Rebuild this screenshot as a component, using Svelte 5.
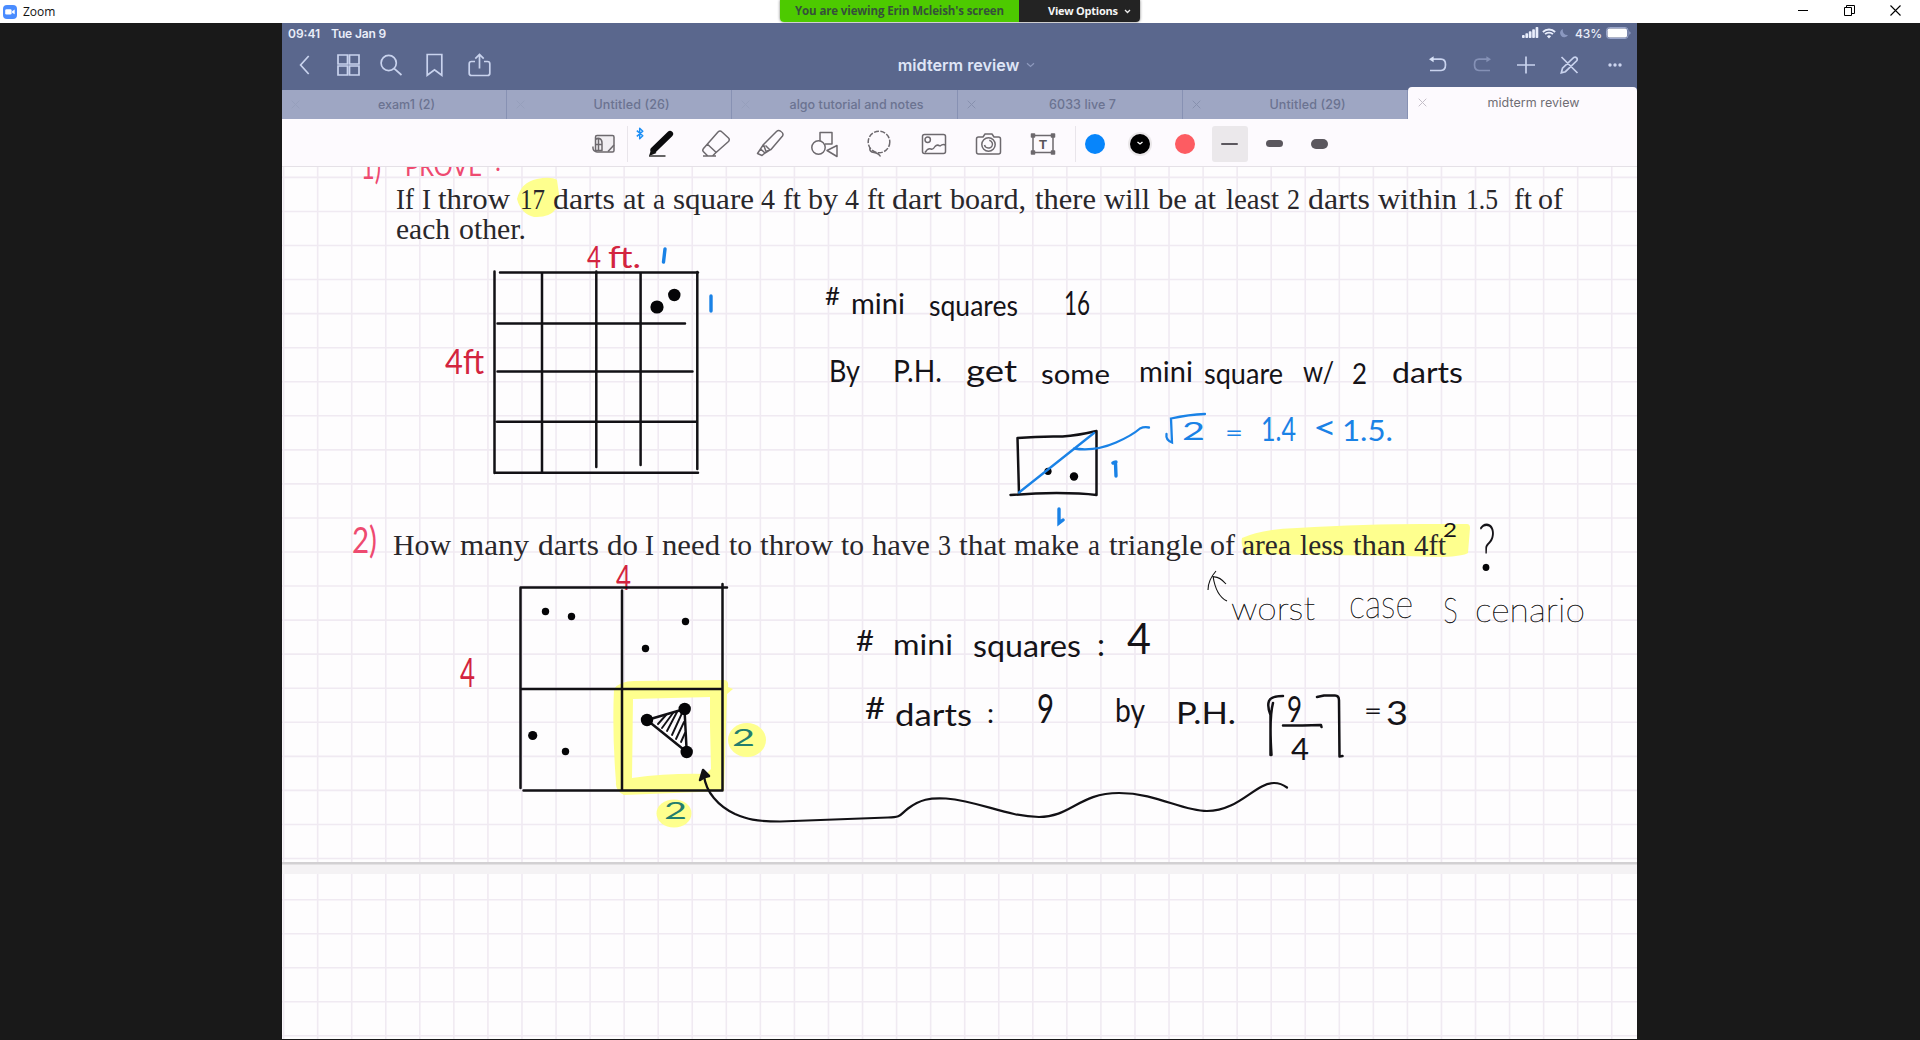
<script>
  const tabs = ['exam1 (2)', 'Untitled (26)', 'algo tutorial and notes', '6033 live 7', 'Untitled (29)'];
  const tabWidths = [57, 76, 134, 67, 76];

  const pitch = 34.055;
  const columns = Array.from({ length: 40 }, (_, i) => 283.6 + i * pitch);
  const rowsOne = Array.from({ length: 21 }, (_, i) => 177.4 + i * pitch);
  const rowsTwo = Array.from({ length: 5 }, (_, i) => 899.7 + i * 34);

  // Printed words: text, left edge, width
  const lineOne = [
    ['If', 396, 18], ['I', 422, 9], ['throw', 438, 72], ['17', 520, 25], ['darts', 553, 62],
    ['at', 623, 22], ['a', 653, 12], ['square', 673, 81], ['4', 761, 14], ['ft', 783, 18],
    ['by', 808, 30], ['4', 845, 14], ['ft', 867, 18], ['dart', 892, 50], ['board,', 950, 76],
    ['there', 1035, 61], ['will', 1104, 46], ['be', 1158, 29], ['at', 1194, 22], ['least', 1226, 53],
    ['2', 1287, 13], ['darts', 1308, 62], ['within', 1378, 79], ['1.5', 1466, 32], ['ft', 1514, 18], ['of', 1538, 25]
  ];
  const lineTwo = [['each', 396, 54], ['other.', 459, 67]];
  const lineThree = [
    ['How', 393, 58], ['many', 460, 69], ['darts', 538, 61], ['do', 607, 31], ['I', 645, 9],
    ['need', 662, 58], ['to', 729, 23], ['throw', 760, 73], ['to', 841, 23], ['have', 872, 58],
    ['3', 938, 13], ['that', 959, 47], ['make', 1014, 65], ['a', 1088, 12], ['triangle', 1109, 94],
    ['of', 1210, 25], ['area', 1242, 49], ['less', 1300, 44], ['than', 1353, 53], ['4ft', 1414, 32]
  ];
  const printed = [
    ...lineOne.map((w) => [...w, 209]),
    ...lineTwo.map((w) => [...w, 239]),
    ...lineThree.map((w) => [...w, 554.5])
  ];

  // Pen notes: text, left edge, width, baseline, font size, ink
  const notes = [
    ['1)', 361, 20, 179, 36, 'pink'], ['PROVE', 405, 77, 175.5, 27, 'pink'], [':', 495, 6, 171, 27, 'pink'],
    ['4', 587, 14, 268, 30, 'red'], ['ft.', 608, 33, 268, 30, 'red'],
    ['4ft', 445, 39, 374, 34, 'red'],
    ['#', 825, 15, 305, 25, 'ink'], ['mini', 851, 54, 314, 28, 'ink'], ['squares', 929, 89, 316, 29, 'ink'],
    ['16', 1064, 26, 315, 33, 'ink'],
    ['By', 829, 31, 382, 31, 'ink'], ['P.H.', 893, 49, 382, 31, 'ink'], ['get', 966, 51, 382, 30, 'ink'],
    ['some', 1041, 69, 384, 26, 'ink'], ['mini', 1139, 54, 382, 28, 'ink'], ['square', 1204, 79, 384, 28, 'ink'],
    ['w/', 1303, 31, 382, 29, 'ink'], ['2', 1352, 15, 384, 28, 'ink'], ['darts', 1392, 71, 383, 29, 'ink'],
    ['2', 1182, 23, 440, 25, 'blue'], ['=', 1225, 18, 441, 24, 'blue'], ['1.4', 1261, 35, 441, 32, 'blue'],
    ['<', 1313, 24, 439, 32, 'blue'], ['1.5.', 1342, 51, 441, 29, 'blue'],
    ['2)', 352, 25, 553, 37, 'pink'],
    ['2', 1443, 14, 537, 19, 'ink'], ['?', 1478, 18, 569, 64, 'ink thin'],
    ['4', 616, 15, 590, 34, 'red'], ['4', 460, 15, 687, 41, 'red'],
    ['2', 732, 23, 746, 23, 'green'], ['2', 664, 23, 819, 24, 'green'],
    ['#', 856, 18, 651, 29, 'ink'], ['mini', 893, 60, 655, 29, 'ink'], ['squares', 973, 108, 657, 30, 'ink'],
    [':', 1097, 8, 656, 30, 'ink'], ['4', 1127, 24, 654, 42, 'ink'],
    ['#', 865, 20, 719, 31, 'ink'], ['darts', 895, 77, 726, 30, 'ink'], [':', 987, 7, 723, 26, 'ink'],
    ['9', 1037, 17, 723, 40, 'ink'], ['by', 1115, 30, 722, 33, 'ink'], ['P.H.', 1176, 60, 724, 31, 'ink'],
    ['9', 1287, 15, 722, 37, 'ink'], ['4', 1291, 18, 760, 30, 'ink'], ['=', 1364, 18, 719, 24, 'ink'],
    ['3', 1386, 22, 725, 33, 'ink'],
    ['worst', 1231, 84, 620, 32, 'fine'], ['case', 1349, 64, 618, 40, 'fine'],
    ['s', 1443, 15, 623, 50, 'fine'], ['cenario', 1475, 110, 622, 34, 'fine']
  ];

  // Dart marks: x, y, radius
  const darts = [
    [657, 307, 6.6], [674.3, 295, 6.2], [1048, 471.3, 3.6], [1074, 476.5, 4.2],
    [545.5, 611.5, 3.7], [571.5, 616.5, 3.7], [685.5, 621.5, 3.7], [645.5, 648.5, 3.7],
    [532.7, 735.5, 4.6], [565.5, 751.5, 3.7],
    [647, 720, 6.2], [684.7, 709, 6.2], [686.7, 752, 6.2], [1486, 567.5, 3.4]
  ];
</script>

<div class="window">
  <header class="titlebar">
    <div class="app">
      <svg width="14" height="14" viewBox="0 0 14 14"><rect width="14" height="14" rx="4" fill="#4a8cff" /><rect x="2.2" y="4.3" width="6.4" height="5.2" rx="1.3" fill="#fff" /><path d="M9.1 6.2 11.7 4.6v4.6L9.1 7.7z" fill="#fff" /></svg>
      <span class="appname">Zoom</span>
    </div>
    <div class="share">
      <div class="viewing">You are viewing Erin Mcleish's screen</div>
      <div class="options">View Options <svg width="7" height="5" viewBox="0 0 7 5"><path d="M1 1l2.5 2.5L6 1" fill="none" stroke="#eee" stroke-width="1.3" /></svg></div>
    </div>
    <div class="controls">
      <svg width="11" height="11" viewBox="0 0 11 11"><path d="M0 5.5h10" stroke="#000" /></svg>
      <svg width="11" height="11" viewBox="0 0 11 11"><path d="M.5 2.5h7v8h-7zM2.5 2.5v-2h8v8h-3" fill="none" stroke="#000" /></svg>
      <svg width="11" height="11" viewBox="0 0 11 11"><path d="M.5.5l10 10M10.5.5l-10 10" stroke="#000" stroke-width="1.1" /></svg>
    </div>
  </header>

  <main class="screen">
    <section class="nav">
      <div class="status">
        <span class="clock">09:41</span><span class="date">Tue Jan 9</span>
        <div class="signals">
          <svg width="17" height="12" viewBox="0 0 17 12" fill="#e9eefc"><rect y="8" width="2.7" height="3" rx=".8" /><rect x="3.4" y="6.3" width="2.7" height="4.7" rx=".8" /><rect x="6.8" y="4.3" width="2.7" height="6.7" rx=".8" /><rect x="10.2" y="2.2" width="2.7" height="8.8" rx=".8" /><rect x="13.6" y="0" width="2.7" height="11" rx=".8" /></svg>
          <svg class="wifi" width="14" height="11" viewBox="0 0 14 11"><path d="M.9 4a8.6 8.6 0 0 1 12.2 0M3.1 6.2a5.5 5.5 0 0 1 7.8 0" fill="none" stroke="#e9eefc" stroke-width="1.9" /><path d="M7 10.6 4.9 8.3a3 3 0 0 1 4.2 0z" fill="#e9eefc" /></svg>
          <svg class="moon" width="9" height="10" viewBox="0 0 9 10"><path d="M3 1a4.2 4.2 0 1 0 5 6A4.6 4.6 0 0 1 3 1z" fill="#8b98c0" /></svg>
          <span class="percent">43%</span>
          <svg width="25" height="12" viewBox="0 0 25 12"><rect x=".5" y=".5" width="21.5" height="11" rx="3" fill="none" stroke="#9aa6cb" /><rect x="1.5" y="1.5" width="19.500" height="9" rx="1.8" fill="#fff" /><path d="M23.3 4.2v3.6q1.3-.6 1.3-1.8t-1.3-1.8z" fill="#9aa6cb" /></svg>
        </div>
      </div>
      <div class="bar">
        <div class="left">
          <svg width="11" height="22" viewBox="0 0 11 22"><path d="M9.7 2 1.6 11l8.1 9" /></svg>
          <svg width="23" height="22" viewBox="0 0 23 22"><path d="M1 1h9.5v9H1zM12.5 1H22v9h-9.500zM1 12h9.500v9H1zM12.500 12H22v9h-9.500z" /></svg>
          <svg width="23" height="22" viewBox="0 0 23 22"><circle cx="8.700" cy="9" r="7.600" /><path d="M14.300 14.600 21.500 21" /></svg>
          <svg width="17" height="24" viewBox="0 0 17 24"><path d="M1.200 1.500h14.600v20.800L8.500 16.800l-7.300 5.500z" /></svg>
          <svg width="23" height="24" viewBox="0 0 23 24"><path d="M7 8.500H3.500Q1.200 8.500 1.200 10.800v9.400q0 2.300 2.300 2.300h16q2.300 0 2.300-2.300v-9.400q0-2.300-2.300-2.300H16M11.500 15.500V1.700M7.300 5.700l4.200-4.200 4.200 4.200" /></svg>
        </div>
        <div class="title">midterm review <svg width="9" height="6" viewBox="0 0 9 6"><path d="M1 1.200l3.500 3.300L8 1.200" /></svg></div>
        <div class="right">
          <svg width="18" height="18" viewBox="0 0 18 18"><path d="M2 3.200h10q4.500 0 4.500 5.500t-4.500 5.800H1" /><path class="solid" d="M0 3.200 4.600.2v6z" /></svg>
          <svg class="dim" width="18" height="18" viewBox="0 0 18 18"><path d="M16 3.200H6q-4.500 0-4.500 5.500T6 14.500h11" /><path class="soliddim" d="M18 3.200 13.400.2v6z" /></svg>
          <svg width="18" height="18" viewBox="0 0 18 18"><path d="M0 9h18M9 .5v17" /></svg>
          <svg width="19" height="18" viewBox="0 0 19 18"><path d="M1.500 1 17.500 17M1.300 16.800l1.200-4.600L13.800 1.400q1.600-.9 2.900.5 1.100 1.400 0 2.900L5.400 15.700z" /></svg>
          <svg width="14" height="6" viewBox="0 0 14 6" class="dots"><circle cx="2" cy="3" r="1.700" /><circle cx="7" cy="3" r="1.700" /><circle cx="12" cy="3" r="1.700" /></svg>
        </div>
      </div>
      <div class="tabs">
        {#each tabs as tab, i}
          <div class="tab">
            <svg class={i < 3 ? 'close faint' : 'close'} width="9" height="9" viewBox="0 0 9 9"><path d="M.7.7l7.600 7.600M8.300.7.7 8.300" /></svg>
            <svg class="label" width="226" height="18"><text x="124.500" y="13.500" text-anchor="middle" textLength={tabWidths[i]}>{tab}</text></svg>
          </div>
        {/each}
        <div class="tab active">
          <svg class="close" width="9" height="9" viewBox="0 0 9 9"><path d="M.7.7l7.600 7.600M8.300.7.7 8.300" /></svg>
          <svg class="label" width="226" height="18"><text x="128.500" y="13" text-anchor="middle" textLength="92">midterm review</text></svg>
        </div>
      </div>
    </section>

    <section class="tools">
      <div class="cell side">
        <svg width="24" height="20" viewBox="0 0 24 20"><path d="M5 1.500h15.500q1.500 0 1.500 1.500v13.500q0 1.500-1.500 1.500H5q-1.500 0-1.500-1.500V3Q3.500 1.500 5 1.500z" fill="#f1eef2" /><path d="M3.500 5.500Q5 4 7.500 4.500 10 5.500 10 9v7.500H3.500M1 12.500q-.5 4.500 3 5M3.500 10.500H10M6.500 5v11M22 11l-6 6.500" /></svg>
      </div>
      <div class="rule"></div>
      <div class="cell pen">
        <svg class="bluetooth" width="8" height="13" viewBox="0 0 8 13"><path d="M.8 3.600l6 5.200L3.700 11.700V1.300l3.100 2.900-6 5.200" /></svg>
        <svg width="28" height="29" viewBox="0 0 28 29"><path d="M6.500 21 23 5" stroke="#0b0b0d" stroke-width="6.200" stroke-linecap="round" /><path d="M2 27 4.500 19.500l5 4.500z" fill="#111" stroke="none" /><path d="M2 27H18.500" stroke="#333" stroke-width="1.500" /></svg>
      </div>
      <div class="cell">
        <svg width="30" height="29" viewBox="0 0 30 29"><path d="M2.500 19.500 17 3q2-2 4 0l6.500 6q1.500 1.500 0 3.500L14.500 24l-3 3H6.800l-4.300-4.200q-1.500-1.500 0-3.300zM6.500 15.200l8.500 8M2 27h13" /></svg>
      </div>
      <div class="cell">
        <svg width="29" height="29" viewBox="0 0 29 29"><path d="M7.500 15.500 20.500 2.500q2-1.800 4.500 0 3 2 1.500 4.500L15 20.500l-5 2zM7.500 15.500 4.500 20l4.500 4 5.500-3.500M9.500 16.500l4 4M4.500 20 1.500 24.500l4.500 2 3-2.500" /></svg>
      </div>
      <div class="cell">
        <svg width="29" height="28" viewBox="0 0 29 28"><path d="M10 11V2.500h12V14H15" /><circle cx="8.500" cy="17.500" r="6.700" /><path d="M17 20.500 27 15.500v11z" /></svg>
      </div>
      <div class="cell">
        <svg width="26" height="28" viewBox="0 0 26 28"><circle cx="13" cy="12" r="10.800" stroke-dasharray="5 1.500" /><path d="M4 17.500q-1 4.500 4 5 4.500.5 6.500 4" /></svg>
      </div>
      <div class="cell">
        <svg width="26" height="24" viewBox="0 0 26 24"><rect x="1.500" y="2.500" width="23" height="19" rx="2" /><circle cx="6.700" cy="7.800" r="2.700" /><path d="M4 20.500q3-5 6-3.500 2 1 4-2.500 2-2.500 5-.5 3-2.500 5.500-1" /></svg>
      </div>
      <div class="cell">
        <svg width="27" height="24" viewBox="0 0 27 24"><path d="M3.500 5H8l2-3h7l2 3h4.500q2 0 2 2v13q0 2-2 2h-20q-2 0-2-2V7q0-2 2-2z" /><circle cx="13.500" cy="12.500" r="6.700" /><path d="M9.500 13a4 4 0 0 0 7.800-2 4.500 4.500 0 0 0-3-2.700" /></svg>
      </div>
      <div class="cell">
        <svg width="26" height="24" viewBox="0 0 26 24"><rect x="3" y="3.500" width="20" height="17" /><path d="M1.500 2h3v3h-3zM21.500 2h3v3h-3zM1.500 19h3v3h-3zM21.500 19h3v3h-3z" fill="#6d696e" /><text class="tletter" x="13" y="17" text-anchor="middle">T</text></svg>
      </div>
      <div class="rule late"></div>
      <div class="swatch"><i class="dot azure"></i></div>
      <div class="swatch"><i class="dot black"><svg width="8" height="5" viewBox="0 0 8 5"><path d="M1.500 1l2.500 2 2.500-2" stroke="#fff" stroke-width="1.300" /></svg></i></div>
      <div class="swatch"><i class="dot coral"></i></div>
      <div class="swatch chosen"><i class="stroke s1"></i></div>
      <div class="swatch"><i class="stroke s2"></i></div>
      <div class="swatch"><i class="stroke s3"></i></div>
    </section>

    <svg class="canvas" width="1355" height="872" viewBox="282 167 1355 872">
      <rect x="282" y="167" width="1355" height="872" fill="#fefdfe" />
      <g class="grid">
        {#each columns as x}<path d="M{x} 167V862M{x} 874V1039" />{/each}
        {#each rowsOne as y}<path d="M282 {y}H1637" />{/each}
        {#each rowsTwo as y}<path d="M282 {y}H1637" />{/each}
      </g>
      <rect x="282" y="862" width="1355" height="12" fill="#f4f2f4" />
      <rect x="282" y="862" width="1355" height="2.500" fill="#d2d0d2" />

      <g fill="#feff8e">
        <path d="M517 199q4-17 20-20 14-3 20 1l2 14-3 15q-7 9-22 8-13-3-17-18z" />
        <path d="M1242 538q20-9 55-10 70-4 125-4h45q3 0 3 4l-2 25q-5 3-25 4l-40-1q-90-1-155-2-8-6-6-16z" />
        <path fill-rule="evenodd" d="M614 689q6-8 20-8l90-1q5 0 4 7l5 2-6 5-3 97-100 4q-9-4-8-13-4-50-2-93zM633 699l-1 79q37-5 74-4l5-5-1-43v-29z" />
        <ellipse cx="747" cy="740" rx="19" ry="17" /><ellipse cx="674" cy="813.500" rx="17.500" ry="14" />
      </g>

      <g class="printed">
        {#each printed as [word, x, width, y]}<text {x} {y} textLength={width} lengthAdjust="spacingAndGlyphs">{word}</text>{/each}
      </g>
      <g class="notes">
        {#each notes as [word, x, width, y, size, ink]}<text class={ink} {x} {y} font-size={size} textLength={width} lengthAdjust="spacingAndGlyphs">{word}</text>{/each}
      </g>

      <g class="strokes">
        <path d="M494.500 271.500V473M500 272.500H698M542 273V472M596.300 271.500V467M640.600 273V465M697.300 272V469M497.500 323.500H685M497.500 371.500H692.500M497 421.700H697M494.500 472.700H698" />
        <path d="M520.500 788V587.500H727M622 590.500V789M722.500 584V790M520.500 689H722M523.500 790.500H722.500" />
        <path d="M1019 494 1017.500 438q22-2 45-1.500 15-1 34-5.500V495q-15-2-40-2-25 .5-46 2" />
        <path d="M647 720 684.500 709 686.700 752z" />
        <path class="hatch" d="M658 724l8-9M662 728l11-15M667 731l10-19M672 735l11-24M676 739l8-17M681 742l4-9" />
        <path class="tail" d="M704 776C706 792 718 806 735 814c12 5 20 7.500 45 7.500L888 817.500c14 0 12-3 20-9 12-9 22-11 38-10 35 3 60 18 93 18.500 32 0 40-24 80-24 38 0 62 18 88 18 32 0 48-28 67-28q7 0 13 4.500" />
        <path class="solidink" d="M703 770l6 6-4 1-5 3z" />
        <path d="M1283 696q-12 0-14 5-2 5 1.500 14v40M1273 703q-4 15-1.500 52M1317 697l7-1.500h11q4 0 4 5l.5 56 3-.5M1283 725.500q20 0 38-.5l.5 2" />
      </g>
      {#each darts as [cx, cy, r]}<circle {cx} {cy} {r} fill="#050507" />{/each}
      <g class="bluelines">
        <path d="M1019 492.500 1094 433M1074 448.500c13 2 26 1 42-6q16-7 24-14 4-2 9-1" />
        <path d="M1166.500 434q-1 6 5.500 8.500l-1-24q18-4 34-4.500" />
        <path class="bold" d="M665 249l-1.500 13M711 296v15M1113 463q1-1 3-1M1115.500 463l.5 13M1059 509v14l4-3" />
      </g>
      <path class="finearrow" d="M1208 590q0-10 8-19M1213 577q6-1 13 7M1213 576q3 20 14 25" />
    </svg>
  </main>
</div>

<style>
  :global(body) { margin: 0; background: #191919; overflow: hidden; }
  .window { width: 1920px; height: 1040px; background: #191919; font-family: Inter, "Liberation Sans", sans-serif; }
  .titlebar { height: 23px; background: #fff; display: grid; grid-template-columns: 1fr 360px 1fr; }
  .app { display: flex; align-items: center; padding-left: 3px; gap: 6px; font: 12px "Open Sans", sans-serif; color: #111; }
  .appname { letter-spacing: 0; }
  .share { display: flex; height: 22px; font: 700 11.500px/22px "Open Sans", sans-serif; border-radius: 0 0 4px 4px; overflow: hidden; box-shadow: 0 0 3px #777; }
  .viewing { width: 239px; background: #4dca00; color: #35513a; text-align: center; white-space: nowrap; letter-spacing: -0.120px; }
  .options { flex: 1; background: #232323; color: #f5f5f5; display: flex; align-items: center; padding-left: 29px; gap: 6px; font-size: 11px; letter-spacing: -0.250px; }
  .controls { display: flex; align-items: flex-start; justify-content: flex-end; gap: 35px; padding: 5px 19px 0 0; }
  .screen { width: 1355px; margin-left: 282px; height: 1016px; overflow: hidden; display: flex; flex-direction: column; }
  .nav { background: #5a678d; height: 96px; flex: none; display: flex; flex-direction: column; }
  .status { display: flex; align-items: center; height: 20px; padding: 0 6px; color: #e9edf9; font-size: 12px; font-weight: 600; }
  .clock { width: 43px; }
  .date { letter-spacing: -0.150px; }
  .signals { margin-left: auto; display: flex; align-items: center; gap: 4px; }
  .wifi { margin-left: -1px; }
  .percent { margin-left: 2px; font-weight: 500; letter-spacing: -0.100px; }
  .bar { height: 43px; display: grid; grid-template-columns: 1fr auto 1fr; align-items: center; padding: 0 15px 0 17px; }
  .bar svg { fill: none; stroke: #c9d3ee; stroke-width: 1.700; }
  .left { display: flex; align-items: center; }
  .left svg:nth-child(2) { margin-left: 27px; }
  .left svg:nth-child(3) { margin-left: 20px; }
  .left svg:nth-child(4) { margin-left: 23px; }
  .left svg:nth-child(5) { margin-left: 25px; }
  .title { color: #dfe5f6; font-size: 16.200px; font-weight: 600; display: flex; align-items: center; gap: 7px; padding-left: 12px; }
  .title svg { stroke: #8d99bd; stroke-width: 1.200; }
  .right { display: flex; align-items: center; justify-content: flex-end; gap: 26px; }
  .right svg:nth-child(5) { margin-left: 3px; }
  .right svg:nth-child(4) { margin-left: -1px; }
  .bar .dim { stroke: #8591b6; }
  .bar .solid { fill: #d8e2f8; stroke: none; }
  .bar .soliddim { fill: #8591b6; stroke: none; }
  .bar .dots { fill: #ccd5ef; stroke: none; }
  .tabs { flex: 1; display: flex; align-items: flex-end; }
  .tab { width: 224.200px; height: 29.500px; border-right: 1px solid #8791b3; background: #9ea6c3; display: flex; align-items: center; position: relative; overflow: hidden; }
  .tab .close { margin-left: 9px; flex: none; fill: none; stroke: #8790ae; }
  .tab .faint { opacity: 0.3; }
  .label { margin-left: -18px; flex: none; font-size: 12.500px; font-weight: 500; fill: #6b7391; }
  .active { flex: 1; height: 32.500px; background: #fdfafe; border: 0; border-radius: 4px 4px 0 0; }
  .active .close { stroke: #c4bfc8; margin-left: 10px; }
  .active .label { fill: #706d74; font-weight: 400; margin-left: -22px; }
  .tools { height: 48px; flex: none; box-sizing: border-box; background: #fdfafe; border-bottom: 1px solid #e5e1e7; display: flex; align-items: center; padding: 2px 0 0 310px; }
  .cell { width: 54.500px; height: 36px; display: flex; align-items: center; justify-content: center; position: relative; }
  .cell svg { fill: none; stroke: #6d696e; stroke-width: 1.500; stroke-linejoin: round; }
  .side { width: 24px; }
  .rule { width: 1px; height: 36px; background: #e9e5eb; margin: 0 6px 0 11px; }
  .late { margin: 0 -3px 0 5px; }
  .cell .bluetooth { position: absolute; left: 2px; top: 1px; stroke: #1d8ff5; stroke-width: 1.500; }
  .tletter { font: 700 13px "Liberation Sans", sans-serif; fill: #58555a; stroke: none; }
  .swatch { width: 44.800px; height: 36px; display: flex; align-items: center; justify-content: center; }
  .dot { width: 20px; height: 20px; border-radius: 50%; display: flex; align-items: center; justify-content: center; }
  .dot svg { fill: none; }
  .azure { background: #0785fb; }
  .black { background: #000; box-shadow: 0 0 0 2px #eae7e9; }
  .coral { background: #fd5c62; }
  .chosen { background: #ebe8eb; width: 36px; margin: 0 4.400px; border-radius: 3px; }
  .stroke { width: 17px; background: #5b575e; border-radius: 5px; }
  .s1 { height: 2px; }
  .s2 { height: 7px; }
  .s3 { height: 10px; }
  .canvas { display: block; flex: none; }
  .grid { fill: none; stroke: #f0eaf2; stroke-width: 1.600; }
  .printed { font: 28.800px "Liberation Serif", serif; fill: #29272b; }
  .notes { font-family: Lato, "Open Sans", sans-serif; font-weight: 400; }
  .ink { fill: #151318; }
  .red { fill: #d3243f; }
  .pink { fill: #ee4a70; }
  .blue { fill: #1a82e6; }
  .green { fill: #237d6d; }
  .thin { font-weight: 300; }
  .fine { fill: #111; font-weight: 100; stroke: #111; stroke-width: 0.400; }
  .strokes { fill: none; stroke: #121115; stroke-width: 2.500; stroke-linecap: round; stroke-linejoin: round; }
  .hatch { stroke-width: 1.900; }
  .tail { stroke-width: 2.200; }
  .solidink { fill: #121115; }
  .bluelines { fill: none; stroke: #1a82e6; stroke-width: 2.300; stroke-linecap: round; }
  .bold { stroke-width: 3.400; }
  .finearrow { fill: none; stroke: #111; stroke-width: 1.100; }
</style>
